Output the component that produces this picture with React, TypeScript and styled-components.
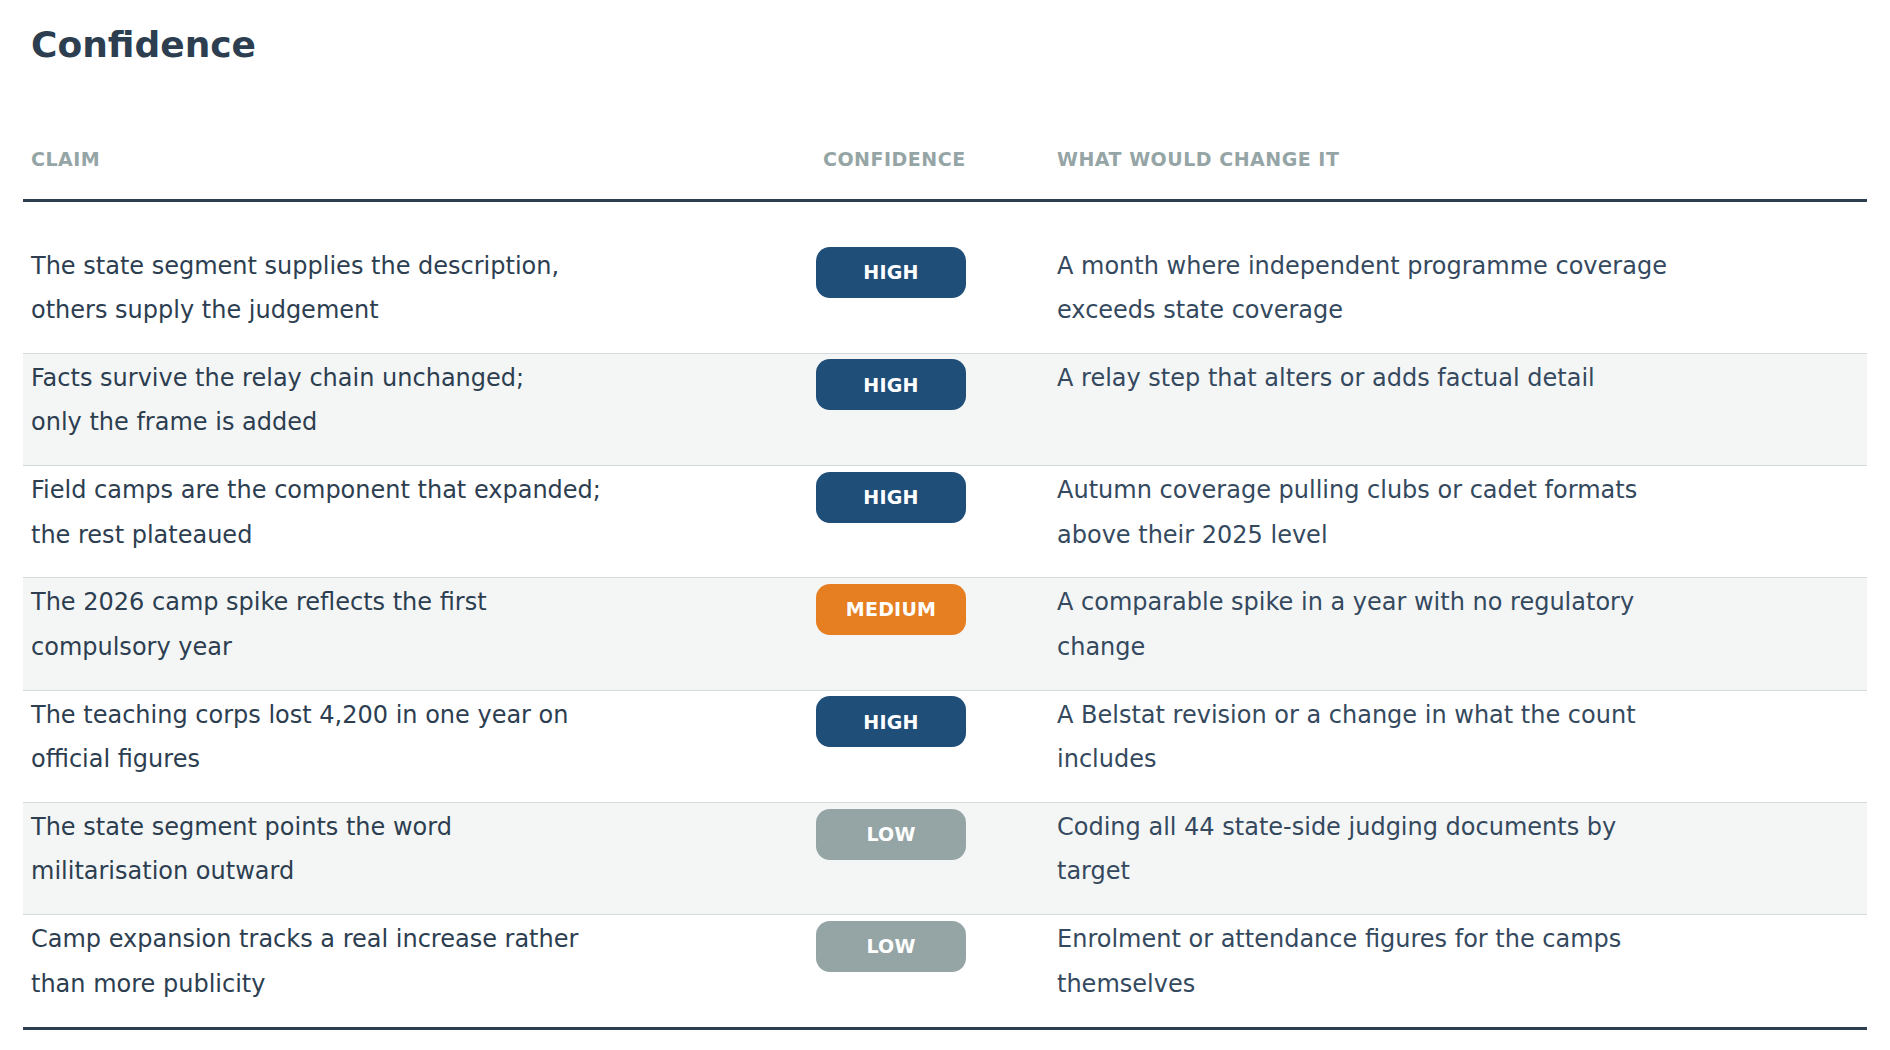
import React from 'react'
import styled, { createGlobalStyle } from 'styled-components'

type Level = 'high' | 'medium' | 'low'

interface Claim {
  claim: string[]
  level: Level
  change: string[]
}

const claims: Claim[] = [
  {
    claim: ['The state segment supplies the description,', 'others supply the judgement'],
    level: 'high',
    change: ['A month where independent programme coverage', 'exceeds state coverage'],
  },
  {
    claim: ['Facts survive the relay chain unchanged;', 'only the frame is added'],
    level: 'high',
    change: ['A relay step that alters or adds factual detail'],
  },
  {
    claim: ['Field camps are the component that expanded;', 'the rest plateaued'],
    level: 'high',
    change: ['Autumn coverage pulling clubs or cadet formats', 'above their 2025 level'],
  },
  {
    claim: ['The 2026 camp spike reflects the first', 'compulsory year'],
    level: 'medium',
    change: ['A comparable spike in a year with no regulatory', 'change'],
  },
  {
    claim: ['The teaching corps lost 4,200 in one year on', 'official figures'],
    level: 'high',
    change: ['A Belstat revision or a change in what the count', 'includes'],
  },
  {
    claim: ['The state segment points the word', 'militarisation outward'],
    level: 'low',
    change: ['Coding all 44 state-side judging documents by', 'target'],
  },
  {
    claim: ['Camp expansion tracks a real increase rather', 'than more publicity'],
    level: 'low',
    change: ['Enrolment or attendance figures for the camps', 'themselves'],
  },
]

const levelColors: Record<Level, string> = {
  high: '#1f4e79',
  medium: '#e67e22',
  low: '#95a5a6',
}

const GlobalStyle = createGlobalStyle`
  html, body {
    margin: 0;
    padding: 0;
    background: #ffffff;
  }
  body {
    font-family: 'DejaVu Sans', 'Liberation Sans', sans-serif;
    color: #2c3e50;
  }
`

const Page = styled.div`
  padding: 23.5px 23px 0;
`

const Title = styled.h1`
  margin: 0 0 82.5px 8px;
  font-size: 36px;
  line-height: 42px;
  font-weight: 700;
  color: #2c3e50;
`

const Table = styled.div`
  display: flex;
  flex-direction: column;
`

const HeaderRow = styled.div`
  display: grid;
  grid-template-columns: 785px 241px 1fr;
  border-bottom: 3px solid #2c3e50;
  margin-bottom: 40px;
`

const HeaderCell = styled.div<{ $indent?: boolean }>`
  padding: 0 8px 28.5px ${({ $indent }) => ($indent ? '15px' : '8px')};
  font-size: 19px;
  line-height: 22px;
  font-weight: 700;
  letter-spacing: 0.5px;
  text-transform: uppercase;
  color: #95a5a6;
`

const Row = styled.div<{ $striped: boolean; $last: boolean }>`
  display: grid;
  grid-template-columns: 785px 241px 1fr;
  padding-top: 2px;
  padding-bottom: 20.5px;
  background: ${({ $striped }) => ($striped ? '#f4f6f6' : '#ffffff')};
  border-bottom: ${({ $last }) => ($last ? '3px solid #2c3e50' : '1px solid #d5dbdb')};
`

const Cell = styled.div<{ $muted?: boolean }>`
  padding: 0 8px;
  font-size: 24px;
  line-height: 44.4px;
  color: ${({ $muted }) => ($muted ? '#34495e' : '#2c3e50')};
  white-space: nowrap;
`

const Badge = styled.div<{ $level: Level }>`
  margin-top: 3.5px;
  width: 150px;
  height: 51px;
  border-radius: 14px;
  background: ${({ $level }) => levelColors[$level]};
  color: #ffffff;
  display: flex;
  align-items: center;
  justify-content: center;
  font-size: 19px;
  font-weight: 700;
  letter-spacing: 0.2px;
  text-transform: uppercase;
`

const Lines = ({ lines }: { lines: string[] }) => (
  <>
    {lines.map((line, i) => (
      <React.Fragment key={i}>
        {i > 0 && <br />}
        {line}
      </React.Fragment>
    ))}
  </>
)

export default function App() {
  return (
    <>
      <GlobalStyle />
      <Page>
        <Title>Confidence</Title>
        <Table>
          <HeaderRow>
            <HeaderCell>Claim</HeaderCell>
            <HeaderCell $indent>Confidence</HeaderCell>
            <HeaderCell>What would change it</HeaderCell>
          </HeaderRow>
          {claims.map((c, i) => (
            <Row key={i} $striped={i % 2 === 1} $last={i === claims.length - 1}>
              <Cell>
                <Lines lines={c.claim} />
              </Cell>
              <Cell>
                <Badge $level={c.level}>{c.level}</Badge>
              </Cell>
              <Cell $muted>
                <Lines lines={c.change} />
              </Cell>
            </Row>
          ))}
        </Table>
      </Page>
    </>
  )
}
